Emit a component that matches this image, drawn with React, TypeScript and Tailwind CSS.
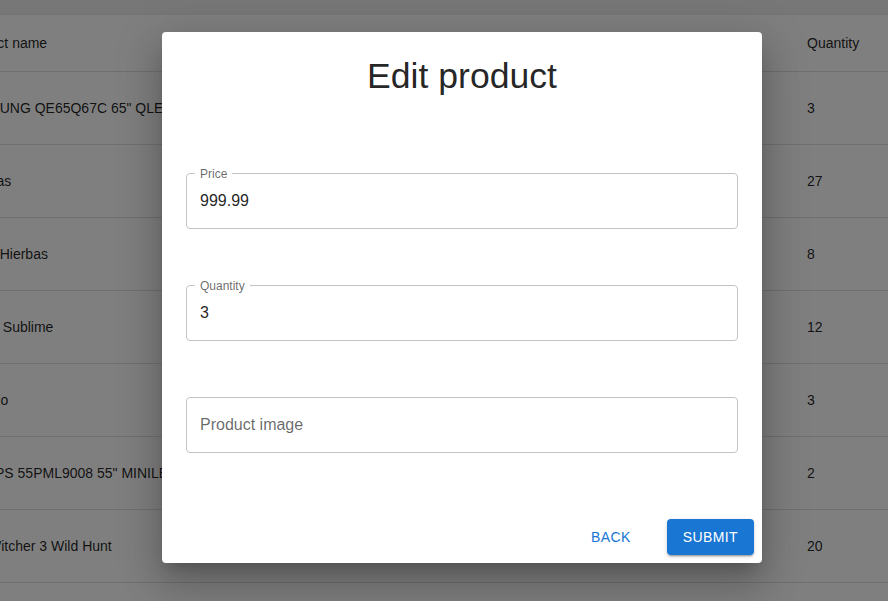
const ROWS = [
  { name: 'SAMSUNG QE65Q67C 65" QLED 4K', qty: 3 },
  { name: 'Galletas', qty: 27 },
  { name: 'Té de Hierbas', qty: 8 },
  { name: 'Aceite Sublime', qty: 12 },
  { name: 'Chorizo', qty: 3 },
  { name: 'PHILIPS 55PML9008 55" MINILED', qty: 2 },
  { name: 'The Witcher 3 Wild Hunt', qty: 20 },
  { name: 'Nintendo Switch OLED', qty: 5 },
]

function OutlinedField({ label, value }: { label: string; value?: string }) {
  const filled = value !== undefined
  return (
    <div className="relative h-[56px] rounded-[4px] border border-[#c4c4c4] flex items-center px-[13px]">
      {filled && (
        <span className="absolute top-[-7px] left-[8px] px-[5px] bg-white text-[12px] leading-[14px] text-black/60">
          {label}
        </span>
      )}
      <span className={`text-[16px] leading-[23px] -mt-px ${filled ? 'text-black/[0.87]' : 'text-black/60'}`}>
        {filled ? value : label}
      </span>
    </div>
  )
}

export default function App() {
  return (
    <div
      className="relative w-[888px] h-[601px] overflow-hidden bg-[#eeeeee]"
      style={{ fontFamily: "'Liberation Sans', Arial, sans-serif" }}
    >
      {/* table behind the dialog */}
      <div className="mt-[15px] ml-[-56px] w-[1000px] bg-white shadow-[0px_2px_1px_-1px_rgba(0,0,0,0.2),0px_1px_1px_0px_rgba(0,0,0,0.14),0px_1px_3px_0px_rgba(0,0,0,0.12)] text-[14px] text-black/[0.87]">
        <div className="flex items-center h-[57px] pt-px border-b border-[#e0e0e0]">
          <div className="w-[847px] px-4">Product name</div>
          <div className="w-[120px] px-4">Quantity</div>
        </div>
        {ROWS.map((r, i) => (
          <div key={i} className="flex items-center h-[73px] border-b border-[#e0e0e0]">
            <div className="w-[847px] px-4 whitespace-nowrap">{r.name}</div>
            <div className="w-[120px] px-4">{r.qty}</div>
          </div>
        ))}
      </div>

      {/* backdrop */}
      <div className="absolute inset-0 bg-black/50" />

      {/* dialog */}
      <div className="absolute left-[162px] top-[32px] w-[600px] h-[531px] rounded-[4px] bg-white flex flex-col shadow-[0px_11px_15px_-7px_rgba(0,0,0,0.2),0px_24px_38px_3px_rgba(0,0,0,0.14),0px_9px_46px_8px_rgba(0,0,0,0.12)]">
        <h2 className="pt-[22px] text-center text-[35.6px] leading-[44px] text-black/[0.87]">Edit product</h2>
        <div className="flex flex-col gap-[56px] px-[24px] mt-[75px]">
          <OutlinedField label="Price" value="999.99" />
          <OutlinedField label="Quantity" value="3" />
          <OutlinedField label="Product image" />
        </div>
        <div className="mt-auto flex justify-end items-center gap-[28px] p-[8px]">
          <button className="h-[36px] px-[8px] rounded-[4px] text-[14px] uppercase tracking-[0.4px] text-[#1976d2]">
            Back
          </button>
          <button className="h-[36px] px-[16px] rounded-[4px] text-[14px] uppercase tracking-[0.4px] text-white bg-[#1976d2] shadow-[0px_3px_1px_-2px_rgba(0,0,0,0.2),0px_2px_2px_0px_rgba(0,0,0,0.14),0px_1px_5px_0px_rgba(0,0,0,0.12)]">
            Submit
          </button>
        </div>
      </div>
    </div>
  )
}
